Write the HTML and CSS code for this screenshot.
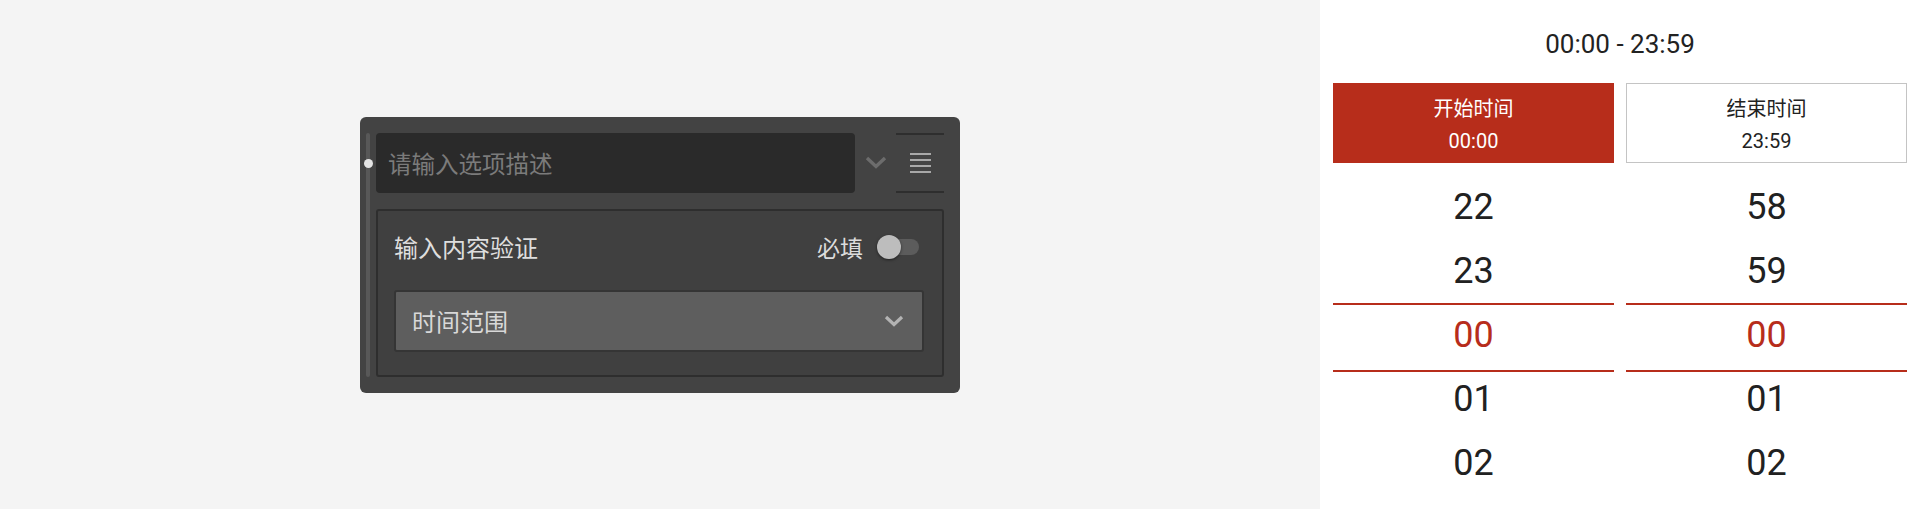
FILE: index.html
```html
<!DOCTYPE html>
<html lang="zh-CN">
<head>
    <meta charset="UTF-8">
    <meta name="viewport" content="width=device-width, initial-scale=1.0">
    <title>时间范围</title>
    <link rel="stylesheet" href="styles.css">
</head>
<body>
    <div class="stage">
        <div class="field-card">
            <div class="drag-bar"><span class="drag-dot"></span></div>
            <div class="field-body">
                <div class="option-row">
                    <div class="option-input">请输入选项描述</div>
                    <div class="option-toggle">
                        <svg width="22" height="13" viewBox="0 0 22 13"><path d="M2 2 L11 10.5 L20 2" fill="none" stroke="#6c6c6c" stroke-width="3.4"/></svg>
                    </div>
                    <div class="option-menu">
                        <svg width="21" height="20" viewBox="0 0 21 20">
                            <rect x="0" y="0" width="21" height="2" fill="#a8a8a8"/>
                            <rect x="0" y="6" width="21" height="2" fill="#a8a8a8"/>
                            <rect x="0" y="12" width="21" height="2" fill="#a8a8a8"/>
                            <rect x="0" y="18" width="21" height="2" fill="#a8a8a8"/>
                        </svg>
                    </div>
                </div>
                <div class="validate-panel">
                    <div class="validate-head">
                        <span class="validate-title">输入内容验证</span>
                        <div class="required">
                            <span>必填</span>
                            <div class="switch"><span class="switch-knob"></span></div>
                        </div>
                    </div>
                    <div class="select-box">
                        <span>时间范围</span>
                        <svg width="20" height="12" viewBox="0 0 20 12"><path d="M2 2 L10 9.5 L18 2" fill="none" stroke="#b3b3b3" stroke-width="3.2"/></svg>
                    </div>
                </div>
            </div>
        </div>
    </div>

    <div class="picker">
        <div class="picker-title">00:00 - 23:59</div>
        <div class="tabs">
            <div class="tab active">
                <span class="tab-label">开始时间</span>
                <span class="tab-time">00:00</span>
            </div>
            <div class="tab">
                <span class="tab-label">结束时间</span>
                <span class="tab-time">23:59</span>
            </div>
        </div>
        <div class="wheels">
            <div class="wheel">
                <div class="wheel-item">22</div>
                <div class="wheel-item">23</div>
                <div class="wheel-item selected">00</div>
                <div class="wheel-item">01</div>
                <div class="wheel-item">02</div>
                <div class="wheel-mark"></div>
            </div>
            <div class="wheel">
                <div class="wheel-item">58</div>
                <div class="wheel-item">59</div>
                <div class="wheel-item selected">00</div>
                <div class="wheel-item">01</div>
                <div class="wheel-item">02</div>
                <div class="wheel-mark"></div>
            </div>
        </div>
    </div>
</body>
</html>
```

FILE: styles.css
```css
* {
    box-sizing: border-box;
}

body {
    margin: 0;
    height: 509px;
    display: flex;
    overflow: hidden;
    font-family: "Noto Sans CJK SC", "Noto Sans", sans-serif;
}

.stage {
    flex: 1;
    background-color: #f4f4f4;
    display: flex;
    align-items: center;
    justify-content: center;
}

/* kartu field gelap */
.field-card {
    width: 600px;
    height: 276px;
    background-color: #434343;
    border-radius: 6px;
    padding: 16px 16px 16px 6px;
    display: flex;
    gap: 6px;
}

.drag-bar {
    position: relative;
    width: 4px;
    background-color: #585858;
    border-radius: 2px;
}

.drag-dot {
    position: absolute;
    left: -2px;
    top: 26px;
    width: 9px;
    height: 9px;
    border-radius: 50%;
    background-color: #e4e4e4;
}

.field-body {
    flex: 1;
    display: flex;
    flex-direction: column;
    gap: 16px;
}

.option-row {
    display: flex;
    height: 60px;
}

.option-input {
    flex: 1;
    background-color: #2a2a2a;
    border-radius: 4px;
    padding-left: 12px;
    display: flex;
    align-items: center;
    font-size: 23.5px;
    color: #7b7b7b;
}

.option-toggle {
    width: 41px;
    display: flex;
    align-items: center;
    justify-content: center;
}

.option-menu {
    width: 48px;
    border-top: 2px solid #2e2e2e;
    border-bottom: 2px solid #2e2e2e;
    display: flex;
    align-items: center;
    justify-content: center;
}

.validate-panel {
    flex: 1;
    background-color: #404040;
    border: 2px solid #2e2e2e;
    border-radius: 3px;
    padding: 0 18px 0 16px;
}

.validate-head {
    height: 72px;
    display: flex;
    align-items: center;
    justify-content: space-between;
    padding-right: 5px;
    margin-bottom: 7px;
}

.validate-title {
    font-size: 24px;
    color: #dedede;
}

.required {
    display: flex;
    align-items: center;
    gap: 16px;
    font-size: 23px;
    color: #dcdcdc;
}

.switch {
    position: relative;
    width: 40px;
    height: 16px;
    border-radius: 8px;
    background-color: #5c5c5c;
}

.switch-knob {
    position: absolute;
    left: -2px;
    top: -4px;
    width: 24px;
    height: 24px;
    border-radius: 50%;
    background-color: #bdbdbd;
    box-shadow: 0 1px 3px rgba(0, 0, 0, 0.5);
}

.select-box {
    height: 62px;
    background-color: #5e5e5e;
    border: 2px solid #353535;
    border-radius: 3px;
    padding: 0 18px 0 16px;
    display: flex;
    align-items: center;
    justify-content: space-between;
    font-size: 24px;
    color: #d8d8d8;
}

/* picker waktu */
.picker {
    width: 600px;
    background-color: #fff;
    padding: 0 13px;
    font-family: Roboto, "Noto Sans CJK SC", sans-serif;
    color: #222;
}

.picker-title {
    padding: 29px 0 24px;
    line-height: 30px;
    text-align: center;
    font-size: 26px;
}

.tabs {
    display: flex;
    gap: 12px;
}

.tab {
    flex: 1;
    height: 80px;
    border: 1px solid #c4c4c4;
    display: flex;
    flex-direction: column;
    align-items: center;
    justify-content: center;
    gap: 5px;
    padding-top: 2px;
}

.tab.active {
    background-color: #b72d1b;
    border-color: #b72d1b;
    color: #fff;
}

.tab-label {
    font-family: "Noto Sans CJK SC", sans-serif;
    font-size: 20px;
    line-height: 28px;
}

.tab-time {
    font-size: 20px;
    line-height: 28px;
}

.wheels {
    display: flex;
    gap: 12px;
    margin-top: 12px;
}

.wheel {
    position: relative;
    flex: 1;
}

.wheel-item {
    height: 64px;
    display: flex;
    align-items: center;
    justify-content: center;
    font-size: 36px;
    color: #212121;
}

.wheel-item.selected {
    color: #b72d1b;
}

.wheel-mark {
    position: absolute;
    left: 0;
    right: 0;
    top: 128px;
    height: 69px;
    border-top: 2px solid #b72d1b;
    border-bottom: 2px solid #b72d1b;
}
```
